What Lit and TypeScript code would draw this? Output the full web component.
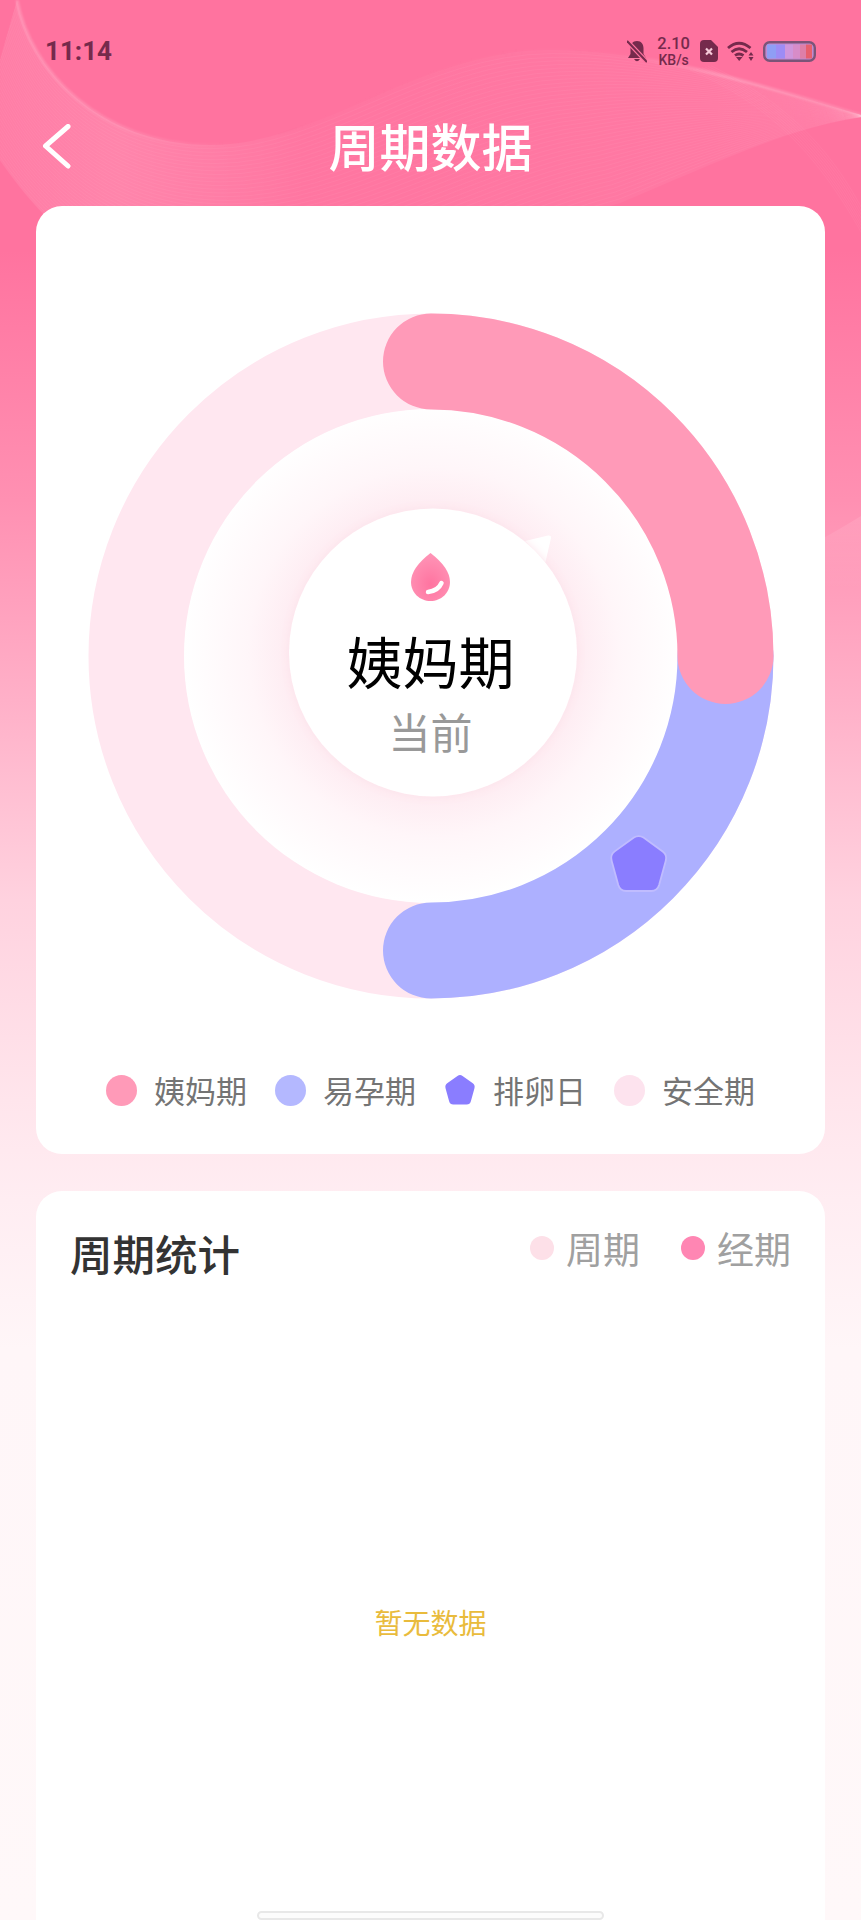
import { LitElement, html, css, svg } from 'lit';
import { customElement } from 'lit/decorators.js';

const legend = [
  { label: '姨妈期', color: '#ff9ab8', shape: 'dot' },
  { label: '易孕期', color: '#b4b8ff', shape: 'dot' },
  { label: '排卵日', color: '#8a7dff', shape: 'penta' },
  { label: '安全期', color: '#fde3ee', shape: 'dot' },
];

// rounded pentagon, used in the ring and the legend
const pentagon = 'M42 6 Q50 1 58 6 L90 29 Q98 35 95 45 L84 85 Q81 95 71 95 L29 95 Q19 95 16 85 L5 45 Q2 35 10 29 Z';

// upper and lower edge of the header wave, each as start + three cubic segments
const waveTop = [17, 0, 30, 70, 100, 145, 210, 145, 320, 145, 420, 50, 550, 50, 650, 50, 760, 85, 861, 115];
const waveBottom = [-20, 130, 30, 210, 100, 300, 260, 300, 400, 300, 520, 230, 620, 203, 700, 170, 780, 130, 861, 117];

function wavePath(t: number) {
  const p = waveTop.map((v, i) => (v + (waveBottom[i] - v) * t).toFixed(1));
  return `M${p[0]} ${p[1]} C${p[2]} ${p[3]} ${p[4]} ${p[5]} ${p[6]} ${p[7]} C${p[8]} ${p[9]} ${p[10]} ${p[11]} ${p[12]} ${p[13]} C${p[14]} ${p[15]} ${p[16]} ${p[17]} ${p[18]} ${p[19]}`;
}

function waveLines() {
  const lines = [];
  for (let i = 1; i < 42; i++) {
    lines.push(svg`<path d="${wavePath(i / 42)}" />`);
  }
  return lines;
}

function sweepLines() {
  const lines = [];
  for (let i = 0; i < 8; i++) {
    const o = i * 3;
    lines.push(svg`<path d="M${690 + o} ${70 - o * 0.2} C${765 + o} ${102} ${815 + o} ${150} ${861 + o * 0.6} ${232}" />`);
  }
  return lines;
}

@customElement('app-root')
export class AppRoot extends LitElement {
  static styles = css`
    :host {
      display: block;
      font-family: 'Noto Sans CJK SC', 'Noto Sans', sans-serif;
    }

    .page {
      position: relative;
      width: 861px;
      height: 1920px;
      overflow: hidden;
      background: linear-gradient(
        180deg,
        #ff739f 0,
        #ff739f 250px,
        #ff90b2 500px,
        #ffb0c8 700px,
        #ffd2df 900px,
        #ffe5ec 1100px,
        #ffedf2 1200px,
        #fff6f8 1350px,
        #fff8f9 1920px
      );
    }

    .waves {
      position: absolute;
      left: 0;
      top: 0;
      width: 861px;
      height: 700px;
      pointer-events: none;
    }

    .waves path {
      fill: none;
      stroke: rgba(255, 255, 255, 0.045);
      stroke-width: 1;
    }

    .waves .edge {
      stroke: url(#edge);
      stroke-width: 3;
      filter: blur(1.2px);
    }

    .waves .band {
      stroke: none;
    }

    .content {
      position: relative;
      display: flex;
      flex-direction: column;
      padding: 0 36px;
    }

    .status {
      display: flex;
      align-items: center;
      justify-content: space-between;
      box-sizing: border-box;
      height: 100px;
      padding: 2px 9px 0 9px;
      color: #752a4c;
    }

    .time {
      font-family: 'Roboto', sans-serif;
      font-size: 26px;
      font-weight: 700;
    }

    .status-right {
      display: flex;
      align-items: center;
      gap: 9px;
    }

    .speed {
      display: flex;
      flex-direction: column;
      align-items: center;
      margin: 0 1px;
      font-family: 'Roboto', sans-serif;
      font-weight: 500;
    }

    .speed b {
      font-size: 16.5px;
      font-weight: 500;
      line-height: 17px;
    }

    .speed span {
      font-size: 14px;
      line-height: 16px;
    }

    .nav {
      position: relative;
      display: flex;
      align-items: center;
      justify-content: center;
      box-sizing: border-box;
      height: 106px;
      padding-bottom: 16px;
      color: #fff;
    }

    .nav h1 {
      margin: 0;
      font-size: 51px;
      font-weight: 500;
      line-height: 60px;
    }

    .back {
      position: absolute;
      left: 6px;
      top: 24px;
    }

    .card {
      background: #fff;
      border-radius: 26px;
    }

    .cycle {
      display: flex;
      flex-direction: column;
      align-items: center;
      height: 948px;
    }

    .ring {
      position: relative;
      width: 700px;
      height: 700px;
      margin-top: 100px;
    }

    .ring > svg {
      display: block;
    }

    .hub {
      position: absolute;
      left: 206px;
      top: 202.5px;
      width: 288px;
      height: 288px;
      display: flex;
      flex-direction: column;
      align-items: center;
    }

    .drop {
      margin-top: 44.5px;
    }

    .hub .name {
      margin-top: 23px;
      font-size: 56px;
      line-height: 72px;
      color: #000;
    }

    .hub .now {
      margin-top: 9px;
      font-size: 42px;
      line-height: 52px;
      color: #999;
    }

    .legend {
      display: flex;
      align-items: center;
      gap: 28px;
      margin-top: 64px;
    }

    .legend-item {
      display: flex;
      align-items: center;
      gap: 17px;
      font-size: 31px;
      line-height: 40px;
      color: #747474;
    }

    .dot {
      width: 31px;
      height: 31px;
      border-radius: 50%;
    }

    .stats {
      margin-top: 37px;
      height: 760px;
      padding: 32px 34px;
      box-sizing: border-box;
    }

    .stats-head {
      display: flex;
      align-items: flex-start;
      justify-content: space-between;
    }

    .stats-head h2 {
      margin: 0;
      font-size: 42.5px;
      font-weight: 500;
      line-height: 60px;
      color: #333;
    }

    .keys {
      display: flex;
      gap: 41px;
    }

    .key {
      display: flex;
      align-items: center;
      gap: 12px;
      font-size: 37px;
      line-height: 50px;
      color: #a0a0a0;
    }

    .key i {
      width: 24px;
      height: 24px;
      border-radius: 50%;
    }

    .empty {
      margin-top: 319px;
      text-align: center;
      font-size: 28px;
      line-height: 40px;
      color: #e9bb3c;
    }

    .home-bar {
      position: absolute;
      left: 257px;
      top: 1911px;
      width: 347px;
      height: 9px;
      box-sizing: border-box;
      border: 2px solid #e8e8e8;
      border-radius: 5px;
      background: #fcfcfc;
    }
  `;

  renderRing() {
    return html`
      <svg width="700" height="700" viewBox="0 0 700 700">
        <defs>
          <radialGradient id="glow" cx="352" cy="346.5" r="250" gradientUnits="userSpaceOnUse">
            <stop offset="0.58" stop-color="#feecf2" />
            <stop offset="0.74" stop-color="#fff6f9" />
            <stop offset="1" stop-color="#ffffff" />
          </radialGradient>
        </defs>
        <circle cx="350" cy="350" r="294.5" fill="none" stroke="#ffe7f0" stroke-width="96" />
        <circle cx="350" cy="350" r="247" fill="url(#glow)" />
        <path d="M644.5 350 A294.5 294.5 0 0 1 350 644.5" fill="none" stroke="#adb0ff" stroke-width="96" stroke-linecap="round" />
        <path d="M350 55.5 A294.5 294.5 0 0 1 644.5 350" fill="none" stroke="#ff9ab8" stroke-width="96" stroke-linecap="round" />
        <g transform="translate(527.7 528) scale(0.6)">
          <path d="${pentagon}" fill="#8a7dff" stroke="#c0bcff" stroke-width="3" />
        </g>
        <path d="M444 235 L467 229.5 Q470.5 229 470 232 L464.5 256 Z" fill="#fff" />
        <circle cx="352" cy="346.5" r="144" fill="#fff" style="filter: drop-shadow(0 0 4px #fde2ea)" />
      </svg>
    `;
  }

  render() {
    return html`
      <div class="page">
        <svg class="waves" viewBox="0 0 861 700">
          <defs>
            <linearGradient id="band" gradientUnits="userSpaceOnUse" x1="0" y1="0" x2="861" y2="0">
              <stop offset="0" stop-color="#fff" stop-opacity="0.07" />
              <stop offset="0.14" stop-color="#fff" stop-opacity="0.13" />
              <stop offset="0.36" stop-color="#fff" stop-opacity="0.02" />
              <stop offset="0.62" stop-color="#fff" stop-opacity="0.03" />
              <stop offset="0.88" stop-color="#fff" stop-opacity="0.05" />
              <stop offset="1" stop-color="#fff" stop-opacity="0.02" />
            </linearGradient>
            <linearGradient id="edge" gradientUnits="userSpaceOnUse" x1="0" y1="0" x2="861" y2="0">
              <stop offset="0" stop-color="#fff" stop-opacity="0.22" />
              <stop offset="0.14" stop-color="#fff" stop-opacity="0.14" />
              <stop offset="0.28" stop-color="#fff" stop-opacity="0" />
              <stop offset="0.72" stop-color="#fff" stop-opacity="0.02" />
              <stop offset="0.84" stop-color="#fff" stop-opacity="0.24" />
              <stop offset="1" stop-color="#fff" stop-opacity="0.14" />
            </linearGradient>
            <linearGradient id="low" x1="0" y1="0" x2="0" y2="1">
              <stop offset="0" stop-color="#fff" stop-opacity="0.1" />
              <stop offset="1" stop-color="#fff" stop-opacity="0" />
            </linearGradient>
          </defs>
          <path class="band" style="fill:url(#band)" d="${wavePath(0)} L861 117 C780 130 700 170 620 203 C520 230 400 300 260 300 C100 300 30 210 -20 130 Z" />
          ${waveLines()}
          ${sweepLines()}
          <path class="edge" d="${wavePath(0)}" />
          <path class="band" style="fill:url(#low)" d="M820 540 Q845 526 861 516 L861 590 L820 590 Z" />
        </svg>
        <div class="content">
          <div class="status">
            <span class="time">11:14</span>
            <div class="status-right">
              <svg width="20" height="23" viewBox="0 0 20 23">
                <path d="M10 1 C5.5 1 3.5 4.5 3.5 8 L3.5 14 L1 18 L19 18 L16.5 14 L16.5 8 C16.5 4.5 14.5 1 10 1 Z M7 19 Q10 23.5 13 19 Z" fill="#752a4c" />
                <path d="M0 1 L20 22" stroke="#ff739f" stroke-width="4.6" />
                <path d="M0 1 L20 22" stroke="#752a4c" stroke-width="2.2" />
              </svg>
              <div class="speed"><b>2.10</b><span>KB/s</span></div>
              <svg width="18" height="22" viewBox="0 0 18 22">
                <path d="M4 0 L11 0 L18 7 L18 18 Q18 22 14 22 L4 22 Q0 22 0 18 L0 4 Q0 0 4 0 Z" fill="#752a4c" />
                <path d="M6 8.5 L12 14.5 M12 8.5 L6 14.5" stroke="#f5c9d8" stroke-width="2.2" />
              </svg>
              <svg width="27" height="20" viewBox="0 0 27 20">
                <path d="M1 7 Q12 -2.5 23.5 7 M4.5 11 Q12 4.5 20 11 M8 14.5 Q12 11.5 16.5 14.5" fill="none" stroke="#752a4c" stroke-width="2.8" />
                <path d="M9 16 L12.2 20 L15.5 16 Z" fill="#752a4c" />
                <path d="M24 11 L26.5 14.5 L21.5 14.5 Z M24 20 L26.5 16 L21.5 16 Z" fill="#752a4c" />
              </svg>
              <svg width="53" height="21" viewBox="0 0 53 21">
                <rect x="1.2" y="1.2" width="50.6" height="18.6" rx="5.5" fill="#c08bd0" stroke="#7b5478" stroke-width="2.4" />
                <rect x="4" y="3.5" width="9" height="14" fill="#8f9ef5" />
                <rect x="13" y="3.5" width="9" height="14" fill="#9d8cf5" />
                <rect x="22" y="3.5" width="8" height="14" fill="#cf96dc" />
                <rect x="30" y="3.5" width="7" height="14" fill="#d88cc8" />
                <rect x="37" y="3.5" width="6" height="14" fill="#de7fa8" />
                <rect x="43" y="3.5" width="6" height="14" fill="#e75f6d" />
              </svg>
            </div>
          </div>
          <div class="nav">
            <svg class="back" width="30" height="46" viewBox="0 0 30 46">
              <path d="M26 2.5 L3.5 22 L26 42" fill="none" stroke="#fff" stroke-width="5" stroke-linecap="round" stroke-linejoin="round" />
            </svg>
            <h1>周期数据</h1>
          </div>
          <div class="card cycle">
            <div class="ring">
              ${this.renderRing()}
              <div class="hub">
                <svg class="drop" width="39" height="48" viewBox="0 0 39 48">
                  <defs>
                    <radialGradient id="dropFill" cx="0.5" cy="0.65" r="0.6">
                      <stop offset="0" stop-color="#ff74a0" />
                      <stop offset="1" stop-color="#ff92b5" />
                    </radialGradient>
                  </defs>
                  <path d="M19.5 0 Q39 15 39 29 C39 40 30 48 19.5 48 C9 48 0 40 0 29 Q0 15 19.5 0 Z" fill="url(#dropFill)" />
                  <path d="M17 39 Q27 38 30.5 30" fill="none" stroke="#fff" stroke-width="4.5" stroke-linecap="round" />
                </svg>
                <div class="name">姨妈期</div>
                <div class="now">当前</div>
              </div>
            </div>
            <div class="legend">
              ${legend.map(
                (l) => html`
                  <div class="legend-item">
                    ${l.shape === 'penta'
                      ? html`<svg width="32" height="32" viewBox="0 0 100 100"><path d="${pentagon}" fill="${l.color}" /></svg>`
                      : html`<span class="dot" style="background:${l.color}"></span>`}
                    <span>${l.label}</span>
                  </div>
                `
              )}
            </div>
          </div>
          <div class="card stats">
            <div class="stats-head">
              <h2>周期统计</h2>
              <div class="keys">
                <div class="key"><i style="background:#fde0e8"></i>周期</div>
                <div class="key"><i style="background:#ff86b3"></i>经期</div>
              </div>
            </div>
            <div class="empty">暂无数据</div>
          </div>
        </div>
        <div class="home-bar"></div>
      </div>
    `;
  }
}
